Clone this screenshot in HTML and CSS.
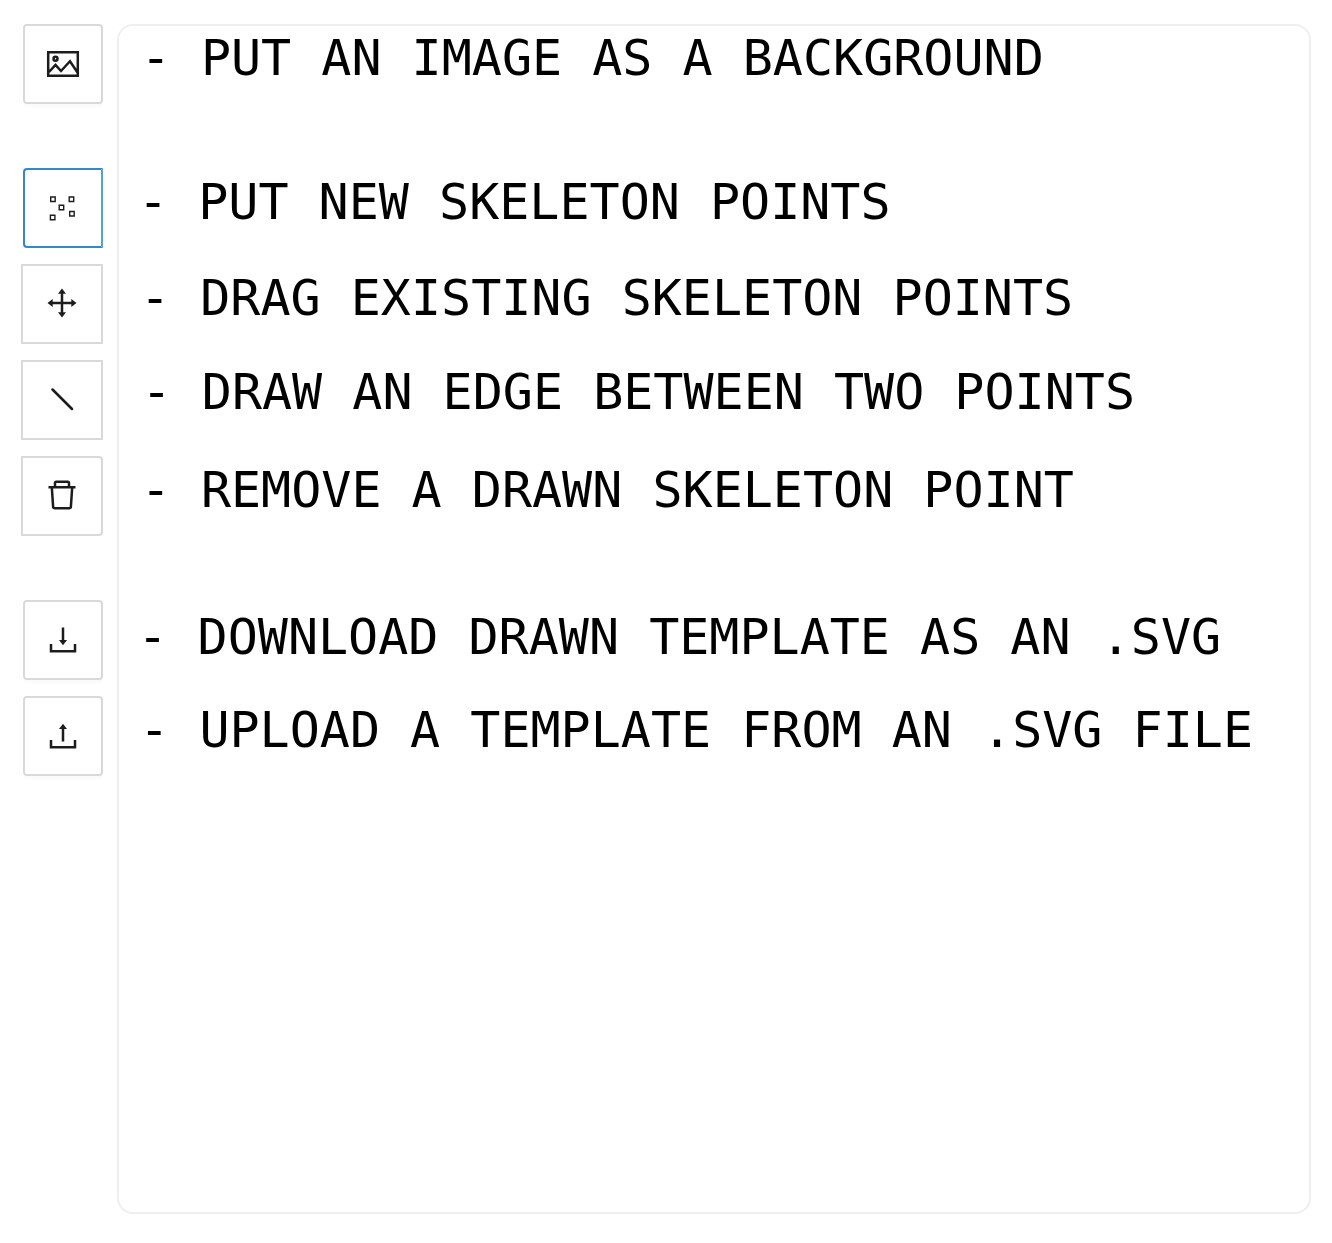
FILE: index.html
```html
<!DOCTYPE html>
<html lang="en">
<head>
<meta charset="utf-8">
<title>Skeleton configurator</title>
<link rel="stylesheet" href="styles.css">
</head>
<body>
<div class="toolbar">
  <button class="tool raised" aria-label="Image"><svg viewBox="0 0 80 80"><path d="M25.2 28.200h29.600v23.600H25.200zM26 48l6.500-7.200 5.500 6.200 9-9.800L54.500 48.500"/><circle cx="32.500" cy="34.800" r="2"/></svg></button>
  <div class="group">
    <button class="tool active" aria-label="Points"><svg class="thin" viewBox="0 0 80 80"><path d="M27.700 29h4.500v4.500h-4.500zM46.200 29h4.500v4.500h-4.500zM36.200 37.200h4.500v4.500h-4.500zM46.700 43.500h4.500v4.500h-4.500zM27.400 47.200h4.500v4.500h-4.500z"/></svg></button>
    <button class="tool wide square" aria-label="Drag"><svg viewBox="0 0 80 80"><path d="M40 27v24M28 39h24"/><path class="solid" d="M40 24.500l4 5.200h-8zM40 53.500l4-5.200h-8zM25.500 39l5.200-4v8zM54.500 39l-5.200-4v8z"/></svg></button>
    <button class="tool wide square" aria-label="Line"><svg viewBox="0 0 80 80"><path class="line" d="M30.500 29.500l19.500 19.500"/></svg></button>
    <button class="tool wide last" aria-label="Remove"><svg viewBox="0 0 80 80"><path d="M26.500 31.200h27M33 31v-4q0-1.300 1.300-1.300h11.400q1.300 0 1.300 1.300v4M29.800 31.200l1.300 19.500q.1 1.500 1.600 1.500h14.600q1.500 0 1.600-1.500l1.300-19.500"/></svg></button>
  </div>
  <div class="group">
    <button class="tool raised" aria-label="Download"><svg viewBox="0 0 80 80"><path d="M28 44v7.300h24V44M40 27.500V41"/><path class="solid" d="M36 40h8l-4 5.200z"/></svg></button>
    <button class="tool raised" aria-label="Upload"><svg viewBox="0 0 80 80"><path d="M28 44v7.300h24V44M40 45.500V32"/><path class="solid" d="M36 33h8l-4-5.200z"/></svg></button>
  </div>
</div>
<main class="canvas">
  <p class="l1">- PUT AN IMAGE AS A BACKGROUND</p>
  <p class="l2">- PUT NEW SKELETON POINTS</p>
  <p class="l3">- DRAG EXISTING SKELETON POINTS</p>
  <p class="l4">- DRAW AN EDGE BETWEEN TWO POINTS</p>
  <p class="l5">- REMOVE A DRAWN SKELETON POINT</p>
  <p class="l6">- DOWNLOAD DRAWN TEMPLATE AS AN .SVG</p>
  <p class="l7">- UPLOAD A TEMPLATE FROM AN .SVG FILE</p>
</main>
</body>
</html>
```
FILE: styles.css
```css
* { box-sizing: border-box; }
body {
  margin: 0;
  padding: 24px 21px 29px;
  height: 1243px;
  display: flex;
  gap: 14px;
  background: #fff;
}
.toolbar { width: 82px; display: flex; flex-direction: column; gap: 64px; }
.group { display: flex; flex-direction: column; gap: 16px; }
.tool {
  align-self: flex-end;
  display: flex;
  justify-content: center;
  align-items: center;
  width: 80px;
  height: 80px;
  padding: 0;
  border: 2px solid #d9d9d9;
  border-radius: 4px;
  background: #fff;
}
.raised { box-shadow: 0 4px 1px rgba(0, 0, 0, .015); }
.wide { width: 82px; }
.square { border-radius: 0; }
.last { border-radius: 0 4px 4px 0; }
.active { border-color: #3389c7; border-right-color: #55a3d6; border-radius: 4px 0 0 4px; }
.tool svg {
  flex: none;
  width: 80px;
  height: 80px;
  fill: none;
  stroke: #1c1c1c;
  stroke-width: 2.5;
}
.tool .thin { stroke-width: 1.4; }
.tool .solid { fill: #1c1c1c; stroke: none; }
.tool .line { stroke-linecap: round; }
.canvas {
  width: 1194px;
  flex: none;
  padding: 3px 0 0 18px;
  border: 2px solid #efefef;
  border-radius: 16px;
}
.canvas p {
  margin: 0;
  font: 50px/58px "DejaVu Sans Mono", monospace;
  color: #000;
  white-space: pre;
}
.canvas .l1 { margin-left: 3.7px; }
.canvas .l2 { margin: 86px 0 0 1px; }
.canvas .l3 { margin: 38px 0 0 3px; }
.canvas .l4 { margin: 36px 0 0 4.6px; }
.canvas .l5 { margin: 40px 0 0 3.7px; }
.canvas .l6 { margin: 89px 0 0 .4px; }
.canvas .l7 { margin: 35px 0 0 2.2px; }
```
